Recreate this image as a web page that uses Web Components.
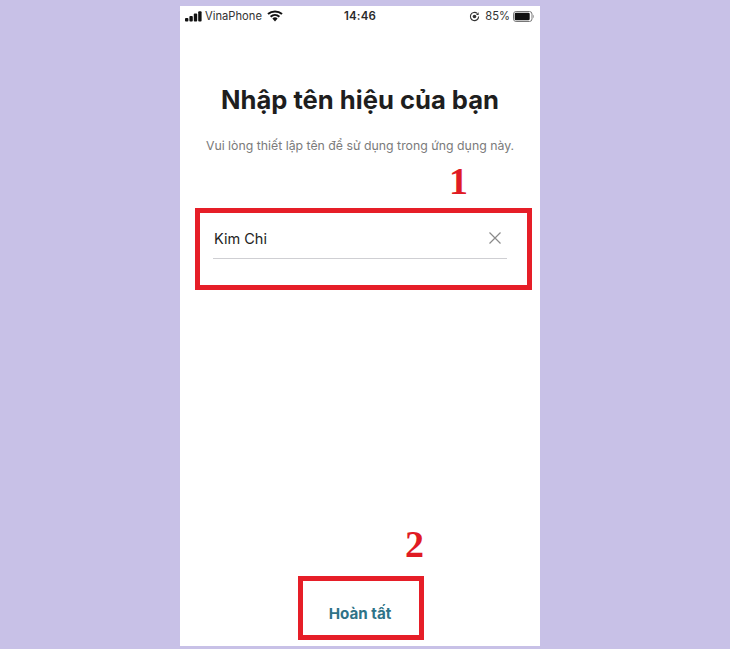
<!DOCTYPE html>
<html lang="vi"><head><meta charset="utf-8"><title>Nhập tên hiệu</title>
<style>
html,body{margin:0;height:649px;overflow:hidden;background:#c8c1e7;font-family:"Inter","Liberation Sans",sans-serif}
body{display:flex;justify-content:flex-start;align-items:flex-start;padding:6px 0 0 180px;box-sizing:border-box}
</style></head><body>
<phone-screen>
  <status-bar slot="status"></status-bar>
  <name-heading slot="head" title-text="Nhập tên hiệu của bạn" sub="Vui lòng thiết lập tên để sử dụng trong ứng dụng này."></name-heading>
  <name-field slot="field" value="Kim Chi"></name-field>
  <done-button slot="done" label="Hoàn tất"></done-button>
  <red-mark slot="marks" n="1" style="left:15px;top:202px;width:337px;height:82px" nx="269" ny="156"></red-mark>
  <red-mark slot="marks" n="2" style="left:118px;top:570px;width:126px;height:64px" nx="225" ny="519"></red-mark>
</phone-screen>
<script>
function def(name, css, html, init){
  customElements.define(name, class extends HTMLElement{
    connectedCallback(){
      if(this.shadowRoot) return;
      const r=this.attachShadow({mode:'open'});
      r.innerHTML='<style>'+css+'</style>'+html;
      if(init) init(this,r);
    }
  });
}
def('phone-screen',
 `:host{display:flex;flex-direction:column;position:relative;width:360px;height:640px;background:#fff;color:#1e1e1e}
  .spacer{flex:1}`,
 `<slot name="status"></slot><slot name="head"></slot><slot name="field"></slot><div class="spacer"></div><slot name="done"></slot><slot name="marks"></slot>`);
def('status-bar',
 `:host{display:grid;grid-template-columns:1fr auto 1fr;align-items:center;height:20px;padding:0 5px 0 5px;font:11.2px "Inter","Liberation Sans",sans-serif;color:#333}
  .l,.r{display:flex;align-items:center}
  .l{gap:3px}.r{justify-content:flex-end;gap:3px}
  .t{font-weight:600;font-size:11.5px;letter-spacing:.2px;color:#2a2a2a}
  svg{display:block}`,
 `<div class="l">
   <svg width="17" height="11" viewBox="0 0 17 11"><rect x="0" y="7" width="3.4" height="3.4" rx=".9" fill="#111"/><rect x="4.4" y="5" width="3.4" height="5.4" rx=".9" fill="#111"/><rect x="8.8" y="2.6" width="3.4" height="7.8" rx=".9" fill="#111"/><rect x="13.2" y=".3" width="3.4" height="10.1" rx=".9" fill="#111"/></svg>
   <span>VinaPhone</span>
   <svg style="margin-left:2px" width="16" height="12" viewBox="0 0 16 12"><path d="M8 11.4 L5.4 8.4 A4 4 0 0 1 10.6 8.4Z" fill="#111"/><path d="M3.6 6.7 A6.6 6.6 0 0 1 12.4 6.7" fill="none" stroke="#111" stroke-width="2"/><path d="M1 4.1 A10.4 10.4 0 0 1 15 4.1" fill="none" stroke="#111" stroke-width="2"/></svg>
  </div>
  <div class="t">14:46</div>
  <div class="r">
   <svg style="margin-right:2px" width="11" height="11" viewBox="0 0 11 11"><path d="M9.6 5.5A4.1 4.1 0 1 1 8.2 2.4" fill="none" stroke="#333" stroke-width="1.1"/><path d="M9.6 1.3V3.9H7Z" fill="#333"/><circle cx="5.5" cy="5.5" r="1.8" fill="#333"/></svg>
   <span>85%</span>
   <svg width="22" height="11" viewBox="0 0 22 11"><rect x=".5" y=".5" width="18.5" height="10" rx="2.6" fill="none" stroke="#777" stroke-width="1"/><rect x="1.7" y="1.7" width="15" height="7.6" rx="1.4" fill="#111"/><path d="M20.2 3.8c1 .3 1 3.1 0 3.4Z" fill="#888"/></svg>
  </div>`);
def('name-heading',
 `:host{display:block;text-align:center}
  h1{margin:58px 0 0;font:700 25.6px/32px "Inter","Liberation Sans",sans-serif;color:#1e1e1e}
  p{margin:22px 0 0;font:12.3px/16px "Inter","Liberation Sans",sans-serif;color:#7b7b7b}`,
 `<h1></h1><p></p>`,
 (h,r)=>{r.querySelector('h1').textContent=h.getAttribute('title-text');r.querySelector('p').textContent=h.getAttribute('sub');});
def('name-field',
 `:host{display:block;margin:62px 33px 0 33px}
  .row{display:flex;align-items:center;justify-content:space-between;height:40px;border-bottom:1.5px solid #cfcfd3;box-sizing:content-box;padding:2px 5px 0 1px;font:14.5px "Inter","Liberation Sans",sans-serif;color:#222}
  svg{display:block}`,
 `<div class="row"><span></span><svg width="14" height="14" viewBox="0 0 14 14"><path d="M1.5 1.5 12.5 12.5M12.5 1.5 1.5 12.5" stroke="#8a8a8a" stroke-width="1.2" fill="none"/></svg></div>`,
 (h,r)=>{r.querySelector('span').textContent=h.getAttribute('value');});
def('done-button',
 `:host{display:block;text-align:center;height:44px;font:700 15.2px/24px "Inter","Liberation Sans",sans-serif;color:#2f7388}`,
 `<span></span>`,
 (h,r)=>{r.querySelector('span').textContent=h.getAttribute('label');});
def('red-mark',
 `:host{position:absolute;box-sizing:border-box;border:5px solid #e61e28;display:block}
  b{position:absolute;font:700 38px/38px "Liberation Serif",serif;color:#e01b24}`,
 `<b></b>`,
 (h,r)=>{const b=r.querySelector('b');b.textContent=h.getAttribute('n');
   const s=h.getBoundingClientRect(),p=h.parentElement.getBoundingClientRect();
   b.style.left=(+h.getAttribute('nx')-(s.left-p.left)-5)+'px';
   b.style.top=(+h.getAttribute('ny')-(s.top-p.top)-5)+'px';});
</script>
</body></html>
